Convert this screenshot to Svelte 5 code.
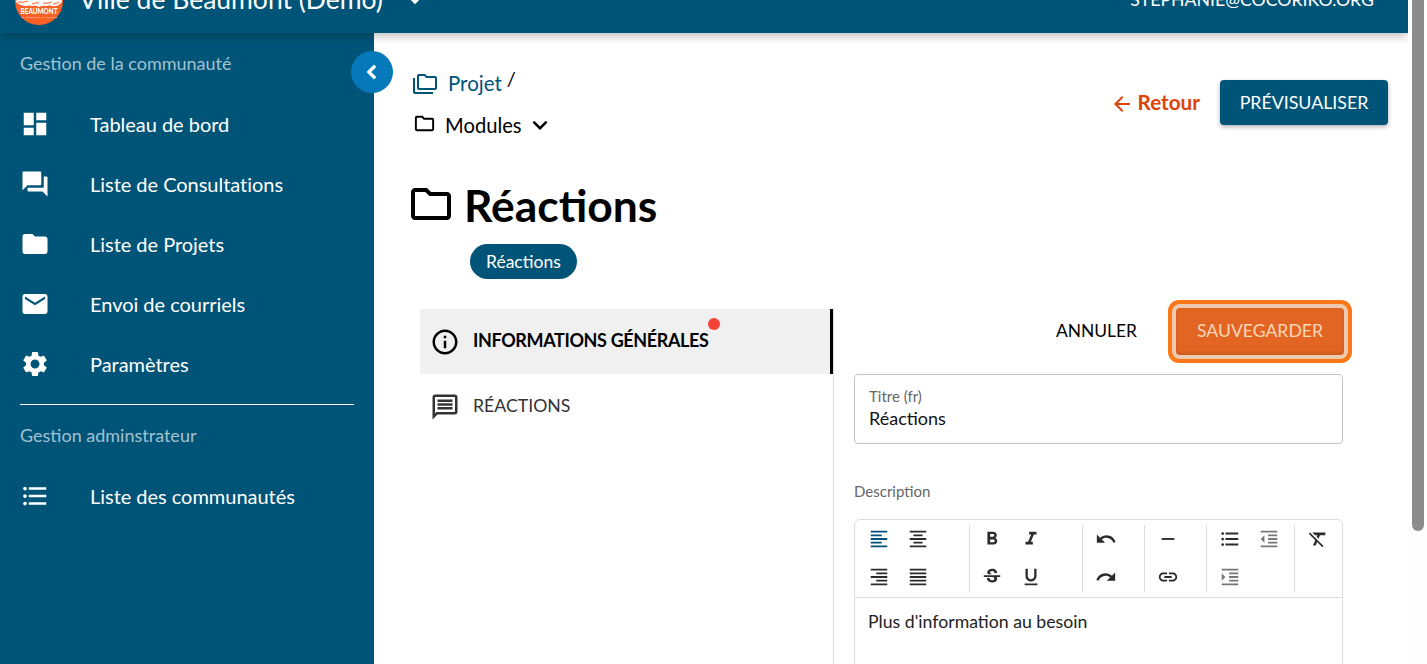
<script>
  const bulleted = 'M4 10.5c-.83 0-1.5.67-1.5 1.5s.67 1.5 1.5 1.5 1.5-.67 1.5-1.5-.67-1.5-1.5-1.5zm0-6c-.83 0-1.5.67-1.5 1.5S3.17 7.5 4 7.5 5.5 6.83 5.5 6 4.83 4.5 4 4.5zm0 12c-.83 0-1.5.68-1.5 1.5s.68 1.5 1.5 1.5 1.5-.68 1.5-1.5-.67-1.5-1.5-1.5zM7 19h14v-2H7v2zm0-6h14v-2H7v2zm0-8v2h14V5H7z';
  const nav1 = [
    { label: 'Tableau de bord', d: 'M3 13h8V3H3v10zm0 8h8v-6H3v6zm10 0h8V11h-8v10zm0-18v6h8V3h-8z' },
    { label: 'Liste de Consultations', d: 'M21 6h-2v9H6v2c0 .55.45 1 1 1h11l4 4V7c0-.55-.45-1-1-1zm-4 6V3c0-.55-.45-1-1-1H3c-.55 0-1 .45-1 1v14l4-4h10c.55 0 1-.45 1-1z' },
    { label: 'Liste de Projets', d: 'M10 4H4c-1.1 0-1.99.9-1.99 2L2 18c0 1.1.9 2 2 2h16c1.1 0 2-.9 2-2V8c0-1.1-.9-2-2-2h-8l-2-2z' },
    { label: 'Envoi de courriels', d: 'M20 4H4c-1.1 0-1.99.9-1.99 2L2 18c0 1.1.9 2 2 2h16c1.1 0 2-.9 2-2V6c0-1.1-.9-2-2-2zm0 4l-8 5-8-5V6l8 5 8-5v2z' },
    { label: 'Paramètres', d: 'M19.14 12.94c.04-.3.06-.61.06-.94 0-.32-.02-.64-.07-.94l2.03-1.58c.18-.14.23-.41.12-.61l-1.92-3.32c-.12-.22-.37-.29-.59-.22l-2.39.96c-.5-.38-1.03-.7-1.62-.94l-.36-2.54c-.04-.24-.24-.41-.48-.41h-3.84c-.24 0-.43.17-.47.41l-.36 2.54c-.59.24-1.13.57-1.62.94l-2.39-.96c-.22-.08-.47 0-.59.22L2.74 8.87c-.12.21-.08.47.12.61l2.03 1.58c-.05.3-.09.63-.09.94s.02.64.07.94l-2.03 1.58c-.18.14-.23.41-.12.61l1.92 3.32c.12.22.37.29.59.22l2.39-.96c.5.38 1.03.7 1.62.94l.36 2.54c.05.24.24.41.48.41h3.84c.24 0 .44-.17.47-.41l.36-2.54c.59-.24 1.13-.56 1.62-.94l2.39.96c.22.08.47 0 .59-.22l1.92-3.32c.12-.22.07-.47-.12-.61l-2.01-1.58zM12 15.6c-1.98 0-3.6-1.62-3.6-3.6s1.62-3.6 3.6-3.6 3.6 1.62 3.6 3.6-1.62 3.6-3.6 3.6z' }
  ];
  const folderOutline = 'M9.17 6l2 2H20v10H4V6h5.17M10 4H4c-1.1 0-1.99.9-1.99 2L2 18c0 1.1.9 2 2 2h16c1.1 0 2-.9 2-2V8c0-1.1-.9-2-2-2h-8l-2-2z';
  const i = {
    left: 'M15 15H3v2h12v-2zm0-8H3v2h12V7zM3 13h18v-2H3v2zm0 8h18v-2H3v2zM3 3v2h18V3H3z',
    center: 'M7 15v2h10v-2H7zm-4 6h18v-2H3v2zm0-8h18v-2H3v2zm4-6v2h10V7H7zM3 3v2h18V3H3z',
    right: 'M3 21h18v-2H3v2zm6-4h12v-2H9v2zm-6-4h18v-2H3v2zm6-4h12V7H9v2zM3 3v2h18V3H3z',
    justify: 'M3 21h18v-2H3v2zm0-4h18v-2H3v2zm0-4h18v-2H3v2zm0-4h18V7H3v2zm0-6v2h18V3H3z',
    bold: 'M15.6 10.79c.97-.67 1.65-1.77 1.65-2.79 0-2.26-1.75-4-4-4H7v14h7.04c2.09 0 3.71-1.7 3.71-3.79 0-1.52-.86-2.82-2.15-3.42zM10 6.5h3c.83 0 1.5.67 1.5 1.5s-.67 1.5-1.5 1.5h-3v-3zm3.5 9H10v-3h3.5c.83 0 1.5.67 1.5 1.5s-.67 1.5-1.5 1.5z',
    italic: 'M10 4v3h2.21l-3.42 8H6v3h8v-3h-2.21l3.42-8H18V4z',
    strike: 'M6.85 7.08C6.85 4.37 9.45 3 12.24 3c1.64 0 3 .49 3.9 1.28.77.65 1.46 1.73 1.46 3.24h-3.01c0-.31-.05-.59-.15-.85-.29-.86-1.2-1.28-2.25-1.28-1.86 0-2.34 1.02-2.34 1.7 0 .48.25.88.74 1.21.38.25.77.48 1.41.7H7.39c-.21-.34-.54-.89-.54-1.92zM21 12v-2H3v2h9.62c1.15.45 1.96.75 1.96 1.97 0 1-.81 1.67-2.28 1.67-1.54 0-2.93-.54-2.93-2.51H6.4c0 .55.08 1.13.24 1.58.81 2.29 3.29 3.3 5.67 3.3 2.27 0 5.3-.89 5.3-4.05 0-.3-.01-1.16-.48-1.96H21z',
    underline: 'M12 17c3.31 0 6-2.69 6-6V3h-2.5v8c0 1.93-1.57 3.5-3.5 3.5S8.5 12.93 8.5 11V3H6v8c0 3.31 2.69 6 6 6zm-7 2v2h14v-2H5z',
    undo: 'M12.5 8c-2.65 0-5.05.99-6.9 2.6L2 7v9h9l-3.62-3.62c1.39-1.16 3.16-1.88 5.12-1.88 3.54 0 6.55 2.31 7.6 5.5l2.37-.78C21.08 11.03 17.15 8 12.5 8z',
    redo: 'M18.4 10.6C16.55 8.99 14.15 8 11.5 8c-4.65 0-8.58 3.03-9.96 7.22L3.9 16c1.05-3.19 4.05-5.5 7.6-5.5 1.95 0 3.73.72 5.12 1.88L13 16h9V7l-3.6 3.6z',
    dash: 'M19 13H5v-2h14v2z',
    link: 'M3.9 12c0-1.71 1.39-3.1 3.1-3.1h4V7H7c-2.76 0-5 2.24-5 5s2.24 5 5 5h4v-1.9H7c-1.71 0-3.1-1.39-3.1-3.1zM8 13h8v-2H8v2zm9-6h-4v1.9h4c1.71 0 3.1 1.39 3.1 3.1s-1.39 3.1-3.1 3.1h-4V17h4c2.76 0 5-2.24 5-5s-2.24-5-5-5z',
    list: bulleted,
    outdent: 'M11 17h10v-2H11v2zm-8-5l4 4V8l-4 4zm0 9h18v-2H3v2zM3 3v2h18V3H3zm8 6h10V7H11v2zm0 4h10v-2H11v2z',
    indent: 'M3 21h18v-2H3v2zM3 8v8l4-4-4-4zm8 9h10v-2H11v2zM3 3v2h18V3H3zm8 6h10V7H11v2zm0 4h10v-2H11v2z',
    clear: 'M3.27 5L2 6.27l6.97 6.97L6.5 19h3l1.57-3.66L16.73 21 18 19.73 3.55 5.27 3.27 5zM6 5v.18L8.82 8h2.4l-.72 1.68 2.1 2.1L14.21 8H20V5H6z'
  };
  const fills = { left: '#005478', outdent: '#777', indent: '#777' };
  const groups = [
    { w: 115, cls: 'first', icons: ['left', 'center', 'right', 'justify'] },
    { w: 113, cls: 'tight', icons: ['bold', 'italic', 'strike', 'underline'] },
    { w: 62, cls: '', icons: ['undo', 'redo'] },
    { w: 62, cls: '', icons: ['dash', 'link'] },
    { w: 88, cls: '', icons: ['list', 'outdent', 'indent'] },
    { w: 47, cls: '', icons: ['clear'] }
  ];
</script>

<div class="page">
  <header class="topbar">
    <div class="brand">
      <svg class="logo" viewBox="0 0 48 48" aria-hidden="true">
        <circle cx="24" cy="24" r="24" fill="#f96127" />
        <path d="M2 21h44l1 4q-4 5-9 4-3-1-6 0-4-1-8 1-3-2-7-1-3-1-6 0-6 0-10-4z" fill="#fff" />
        <path d="M3 25q5 1 10-1M17 27q4-2 7-1M28 26q5 1 9-1M38 27q3 0 6-2" stroke="#f96127" stroke-width="1" fill="none" />
        <text x="24" y="37" text-anchor="middle" textLength="37" lengthAdjust="spacingAndGlyphs" class="logo-t">BEAUMONT</text>
        <text x="24" y="40.6" text-anchor="middle" textLength="36" lengthAdjust="spacing" class="logo-s">LE MONDE ET LA NATURE</text>
      </svg>
      <span class="org">Ville de Beaumont (Demo)</span>
      <svg class="caret" viewBox="0 0 24 24" aria-hidden="true"><path d="M7 10l5 5 5-5z" fill="#fff" /></svg>
    </div>
    <span class="email">STEPHANIE@COCORIKO.ORG</span>
  </header>

  <div class="body">
    <aside class="side">
      <div class="sect">Gestion de la communauté</div>
      <nav>
        {#each nav1 as n}
          <div class="nav-item">
            <svg viewBox="0 0 24 24" aria-hidden="true"><path d={n.d} fill="#fff" /></svg>
            <span>{n.label}</span>
          </div>
        {/each}
      </nav>
      <hr />
      <div class="sect sect2">Gestion adminstrateur</div>
      <div class="nav-item">
        <svg viewBox="0 0 24 24" aria-hidden="true"><path d={bulleted} fill="#fff" /></svg>
        <span>Liste des communautés</span>
      </div>
      <button class="collapse" aria-label="Réduire">
        <svg viewBox="0 0 24 24" aria-hidden="true"><path d="M14.5 7L9.5 12l5 5" fill="none" stroke="#fff" stroke-width="2.6" /></svg>
      </button>
    </aside>

    <main class="main">
      <div class="top">
        <div class="crumbs">
          <div class="crumb1">
            <svg viewBox="0 0 24 24" aria-hidden="true"><path d="M2 6H0v5h.01L0 20c0 1.1.9 2 2 2h18v-2H2V6zm20-2h-8l-2-2H6c-1.1 0-1.99.9-1.99 2L4 16c0 1.1.9 2 2 2h16c1.1 0 2-.9 2-2V6c0-1.1-.9-2-2-2zm0 12H6V4h5.17l2 2H22v10z" fill="#005478" /></svg>
            <span class="projet">Projet</span><span class="slash">/</span>
          </div>
          <div class="crumb2">
            <svg class="fold" viewBox="0 0 24 24" aria-hidden="true"><path d={folderOutline} fill="#000" /></svg>
            <span>Modules</span>
            <svg class="chev" viewBox="0 0 24 24" aria-hidden="true"><path d="M7.41 8.59L12 13.17l4.59-4.58L18 10l-6 6-6-6z" fill="#000" /></svg>
          </div>
        </div>
        <div class="actions">
          <span class="back">
            <svg viewBox="0 0 24 24" aria-hidden="true"><path d="M20 11H7.83l5.59-5.59L12 4l-8 8 8 8 1.41-1.41L7.83 13H20z" fill="#dd4308" /></svg>
            Retour
          </span>
          <button class="preview">PRÉVISUALISER</button>
        </div>
      </div>

      <div class="title">
        <svg viewBox="0 0 24 24" aria-hidden="true"><path d={folderOutline} fill="#000" /></svg>
        <h1>Réactions</h1>
      </div>
      <div class="chip">Réactions</div>

      <div class="columns">
        <div class="tabs">
          <div class="tab active">
            <svg viewBox="0 0 24 24" aria-hidden="true"><path d="M11 7h2v2h-2zm0 4h2v6h-2zm1-9C6.48 2 2 6.48 2 12s4.48 10 10 10 10-4.48 10-10S17.52 2 12 2zm0 18c-4.41 0-8-3.59-8-8s3.59-8 8-8 8 3.59 8 8-3.59 8-8 8z" fill="#000" /></svg>
            <span class="tab-l">INFORMATIONS GÉNÉRALES<i class="dot"></i></span>
          </div>
          <div class="tab">
            <svg viewBox="0 0 24 24" aria-hidden="true"><path d="M20 2H4c-1.1 0-1.99.9-1.99 2L2 22l4-4h14c1.1 0 2-.9 2-2V4c0-1.1-.9-2-2-2zm0 14H5.17L4 17.17V4h16v12zM6 12h12v2H6zm0-3h12v2H6zm0-3h12v2H6z" fill="#333" /></svg>
            <span class="tab-l">RÉACTIONS</span>
          </div>
        </div>

        <div class="form">
          <div class="form-actions">
            <button class="cancel">ANNULER</button>
            <button class="save">SAUVEGARDER</button>
          </div>
          <div class="field">
            <label for="titre">Titre (fr)</label>
            <input id="titre" value="Réactions" />
          </div>
          <div class="desc">Description</div>
          <div class="editor">
            <div class="toolbar">
              {#each groups as g}
                <div class="tgroup {g.cls}" style="width:{g.w}px">
                  {#each g.icons as name}
                    <span class="tool"><svg viewBox="0 0 24 24" aria-hidden="true"><path d={i[name]} fill={fills[name] ?? '#2b2b2b'} /></svg></span>
                  {/each}
                </div>
              {/each}
            </div>
            <div class="content">Plus d'information au besoin</div>
          </div>
        </div>
      </div>
    </main>
    <div class="scroll"><div class="thumb"></div></div>
  </div>
</div>

<style>
  :global(body) { margin: 0; overflow: hidden; background: #fff; }
  .page { width: 1427px; height: 664px; overflow: hidden; position: relative; font-family: Lato, "Liberation Sans", sans-serif; color: #000; }
  svg { display: block; flex: none; }
  button { font-family: inherit; cursor: pointer; }

  .topbar { position: absolute; top: 0; left: 0; width: 1408px; height: 33px; background: #005478; color: #fff; display: flex; justify-content: space-between; box-shadow: 0 2px 10px rgba(0,0,0,.3); z-index: 3; }
  .brand { display: flex; align-items: center; height: 2px; overflow: visible; }
  .logo { width: 48px; height: 48px; margin-left: 15px; }
  .logo-t { font: 900 6.6px Lato, sans-serif; fill: #fff; }
  .logo-s { font: 700 2.4px Lato, sans-serif; fill: #ffd9c4; }
  .org { font-size: 26.5px; margin: -4px 0 0 16px; white-space: nowrap; }
  .caret { width: 26px; height: 26px; margin-left: 19px; }
  .email { font-size: 17.7px; line-height: 20px; margin: -10px 34px 0 0; white-space: nowrap; }

  .body { display: flex; height: 664px; }
  .side { width: 374px; flex: none; background: #005478; color: #fff; position: relative; box-sizing: border-box; padding: 52px 20px 0; }
  .sect { font-size: 18px; line-height: 22px; color: #a3c2cf; }
  .sect2 { margin-top: 19px; }
  nav { margin: 20px 0 10px; }
  .nav-item { height: 60px; display: flex; align-items: center; font-size: 20px; letter-spacing: -.03px; }
  .nav-item svg { width: 30px; height: 30px; }
  .nav-item span { margin-left: 40px; white-space: nowrap; }
  hr { border: 0; height: 1px; background: #fff; margin: 0; width: 334px; }
  .sect2 + .nav-item { margin-top: 20px; }
  .collapse { position: absolute; top: 51px; left: 351px; width: 42px; height: 42px; border-radius: 50%; border: 0; padding: 0; background: #0679bb; display: flex; align-items: center; justify-content: center; z-index: 2; }
  .collapse svg { width: 30px; height: 30px; margin-left: -1px; }

  .main { flex: 1; min-width: 0; box-sizing: border-box; padding: 68px 0 0 37px; }
  .top { display: flex; justify-content: space-between; padding-right: 39px; height: 92px; }
  .crumb1 { display: flex; align-items: center; height: 32px; margin-top: -1px; }
  .crumb1 svg { width: 24px; height: 24px; margin: 2px 0 0 2px; }
  .projet { font-size: 20.5px; color: #005478; margin-left: 11px; }
  .slash { font-size: 20px; margin: -11px 0 0 5px; }
  .crumb2 { display: flex; align-items: center; height: 32px; margin-top: 10px; font-size: 20.2px; }
  .crumb2 .fold { width: 23px; height: 23px; margin: -3px 0 0 2px; }
  .crumb2 span { margin-left: 9px; }
  .crumb2 .chev { width: 30px; height: 30px; margin-left: 3px; }
  .actions { display: flex; align-items: flex-start; margin-top: 12px; }
  .back { display: flex; align-items: center; gap: 4px; font-size: 20.7px; font-weight: 700; color: #dd4308; margin: 8px 20px 0 0; }
  .back svg { width: 24px; height: 24px; margin-top: 4px; }
  .preview { width: 168px; height: 45px; background: #005478; color: #fff; border: 0; border-radius: 4px; font-size: 17.8px; padding: 0 0 2px; box-shadow: 0 2px 4px rgba(0,0,0,.3); }

  .title { display: flex; align-items: center; margin-top: 17px; height: 56px; }
  .title svg { width: 48px; height: 48px; margin: -3px 9px 0 -4px; }
  h1 { margin: 0; font-size: 44.4px; font-weight: 700; line-height: 56px; }
  .chip { margin: 11px 0 0 59px; width: fit-content; height: 35px; padding: 0 16px; box-sizing: border-box; border-radius: 18px; background: #005478; color: #fff; font-size: 17.5px; line-height: 35px; }

  .columns { display: flex; margin-top: 30px; margin-left: 9px; }
  .tabs { width: 414px; flex: none; box-sizing: border-box; border-right: 1px solid #ddd; min-height: 400px; }
  .tab { height: 65px; display: flex; align-items: center; padding-left: 10px; font-size: 17.7px; color: #333; }
  .tab svg { width: 30px; height: 30px; margin-right: 13px; }
  .tab .tab-l { margin-top: -2px; }
  .tab.active .tab-l { margin-top: -4px; }
  .tab.active { background: #f0f0f0; font-size: 18px; font-weight: 700; color: #000; border-right: 3px solid #000; letter-spacing: -.37px; }
  .tab-l { position: relative; white-space: nowrap; }
  .dot { position: absolute; right: -11px; top: -11px; width: 12px; height: 12px; background: #f44336; border-radius: 50%; }

  .form { width: 489px; margin-left: 20px; }
  .form-actions { display: flex; justify-content: flex-end; align-items: center; height: 65px; margin: -11px -1px 0 0; }
  .cancel { background: none; border: 0; padding: 0; color: #000; font-size: 17.4px; margin-right: 39px; }
  .save { width: 168px; height: 47px; margin-top: 2px; padding: 0 0 2px; border: 0; background: #e36523; color: #fdd5b8; font-size: 17.6px; border-radius: 4px; box-shadow: inset 0 -2px 3px rgba(120,50,10,.25), 0 0 0 4px #eecbb0, 0 0 0 8px #fb7718; }
  .field { height: 70px; box-sizing: border-box; border: 1px solid #c4c4c4; border-radius: 4px; padding: 12px 14px 0; margin-top: 11px; }
  label { display: block; font-size: 15px; line-height: 18px; color: #666; }
  input { border: 0; outline: 0; padding: 0; font: 18px Lato, sans-serif; color: #111; width: 100%; height: 26px; display: block; }
  .desc { margin-top: 38px; font-size: 15px; line-height: 18px; color: #666; }
  .editor { margin-top: 19px; border: 1px solid #ddd; border-radius: 6px 6px 0 0; height: 200px; }
  .toolbar { display: flex; height: 77px; border-bottom: 1px solid #ddd; }
  .tgroup { box-sizing: border-box; display: flex; flex-wrap: wrap; align-content: flex-start; padding-left: 3px; border-right: 1px solid #ddd; margin-top: 5px; height: 67px; }
  .tgroup.first { padding-left: 4px; }
  .tgroup.tight { padding-left: 2px; }
  .tgroup:last-child { border-right: 0; }
  .tool { width: 39px; height: 38px; display: flex; align-items: center; justify-content: center; margin: -5px 0 5px; }
  .tool svg { width: 22px; height: 22px; }
  .content { padding: 13px 13px; font-size: 17.7px; line-height: 22px; color: #222; }

  .scroll { position: absolute; top: 0; left: 1408px; width: 19px; height: 664px; background: #fefefe; z-index: 4; }
  .thumb { position: absolute; left: 4px; top: 0; width: 11.5px; height: 531px; background: #8c8c8c; border-radius: 0 0 6px 6px; }
</style>
